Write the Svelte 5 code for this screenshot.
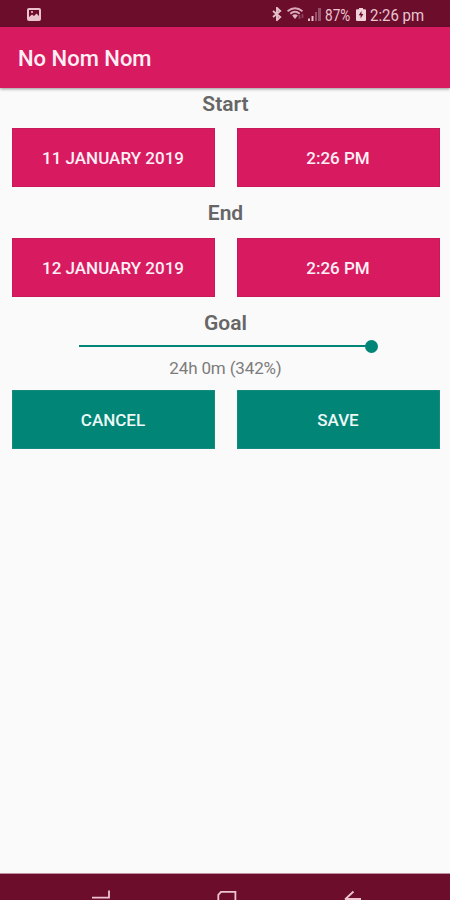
<script>
  const sections = [
    { title: 'Start', date: '11 January 2019', time: '2:26 PM' },
    { title: 'End', date: '12 January 2019', time: '2:26 PM' }
  ];
  const progress = 100;
</script>

<div class="screen">
  <div class="status">
    <svg class="photo" width="14" height="13" viewBox="0 0 14 13">
      <rect x="0" y="0" width="14" height="13" rx="2" fill="#e9c3d0" />
      <path d="M2 2h10v6L9.5 5.5 7 8 5 6.5 2 9z" fill="#6c0d2c" />
      <circle cx="5" cy="4" r="1.1" fill="#e9c3d0" />
    </svg>
    <svg class="bt" width="10" height="14" viewBox="0 0 10 14" fill="none" stroke="#e6bfcc" stroke-width="1.9">
      <path d="M1 4l7.2 6L5 13V1l3.2 3L1 10" />
    </svg>
    <svg class="wifi" width="18" height="14" viewBox="0 0 18 14" fill="none" stroke="#d9a9ba">
      <path d="M.5 4.200Q8 -1.800 15.500 4.200M3.300 6.700Q8 2.700 12.700 6.700" stroke-width="1.8" />
      <path d="M5.200 8.400Q8 6 10.800 8.400L8 12z" fill="#e0b2c1" stroke="none" />
      <path d="M12.500 8v4M15.500 7v4" stroke="#8e4560" stroke-width="1.7" />
    </svg>
    <svg class="signal" width="13" height="13" viewBox="0 0 13 13">
      <path d="M0 10.500h2V13H0zM3.500 8h2v5h-2z" fill="#e6bfcc" />
      <path d="M7 4h2v9H7zM10 0h3v13h-3z" fill="#95506a" />
    </svg>
    <span class="pct">87%</span>
    <svg class="battery" width="10" height="13" viewBox="0 0 10 13">
      <path d="M3 0h4v1.200h2q1 0 1 1V12q0 1-1 1H1q-1 0-1-1V2.200q0-1 1-1h2z" fill="#f0d2dc" />
      <path d="M5.500 3L2.700 7.200h1.900v3.200L7.400 6H5.500z" fill="#6c0d2c" />
    </svg>
    <span class="clock">2:26 pm</span>
  </div>

  <header><h1>No Nom Nom</h1></header>

  <main>
    {#each sections as s}
      <h2>{s.title}</h2>
      <div class="row">
        <button>{s.date}</button>
        <button>{s.time}</button>
      </div>
    {/each}
    <h2 class="goal">Goal</h2>
    <div class="slider">
      <div class="track" style="width: {progress}%"></div>
      <div class="thumb" style="left: {progress}%"></div>
    </div>
    <p>24h 0m (342%)</p>
    <div class="row actions">
      <button>Cancel</button>
      <button>Save</button>
    </div>
  </main>

  <nav>
    <svg width="450" height="26" viewBox="0 1 450 26" fill="none" stroke="#eec4d2" stroke-width="1.8">
      <path d="M92 24.600h17V17.500" />
      <path d="M218.300 28v-6.200l2.700-2.900h14.400V28" />
      <path d="M353.500 18.500l-8.500 8M345 26h16" />
    </svg>
  </nav>
</div>

<style>
  :global(body) { margin: 0; overflow: hidden; }
  .screen {
    width: 450px;
    height: 900px;
    display: flex;
    flex-direction: column;
    overflow: hidden;
    background: #fafafa;
    font-family: Roboto, sans-serif;
  }
  .status {
    flex: none;
    height: 27px;
    box-sizing: border-box;
    padding: 1px 0 0 27px;
    display: flex;
    align-items: center;
    background: #6c0d2c;
    color: #e9c6d1;
    white-space: nowrap;
  }
  .status svg { flex: none; }
  .bt { margin-left: 231px; }
  .wifi { margin-left: 5px; }
  .signal { margin-left: 3px; }
  .status span {
    flex: none;
    padding-top: 2px;
    font-size: 17px;
    line-height: 20px;
    transform-origin: left center;
  }
  .pct { margin-left: 4px; width: 31px; transform: scaleX(0.8); }
  .clock { margin-left: 4px; transform: scaleX(0.88); }
  header {
    flex: none;
    height: 61px;
    padding: 2px 0 0 18px;
    box-sizing: border-box;
    display: flex;
    align-items: center;
    background: #d81b60;
    box-shadow: 0 1px 3px rgba(0, 0, 0, 0.42);
    z-index: 1;
  }
  h1 {
    margin: 0;
    font-size: 22px;
    font-weight: 500;
    line-height: 30px;
    color: #fff0f6;
  }
  main {
    flex: 1;
    margin-top: -1px;
    padding: 0 10.500px 0 11.500px;
    text-align: center;
  }
  h2 {
    margin: 0;
    height: 40.500px;
    padding-top: 4px;
    box-sizing: border-box;
    font-size: 21px;
    line-height: 26px;
    font-weight: 600;
    color: #666;
  }
  .row { display: flex; gap: 22px; margin-bottom: 10.500px; }
  .row + h2 { padding-top: 3px; }
  button {
    flex: 1 1 0;
    height: 59px;
    padding: 1px 0 0;
    border: 1px solid #c81a58;
    border-radius: 0;
    background: #d81b60;
    color: #fff0f6;
    font: 500 17px/20px Roboto, sans-serif;
    text-transform: uppercase;
  }
  .goal { height: 33px; }
  .slider {
    position: relative;
    width: 293px;
    height: 12px;
    margin: 0 auto;
    display: flex;
    align-items: center;
  }
  .track { height: 2px; background: #008577; }
  .thumb {
    position: absolute;
    top: 0;
    width: 13px;
    height: 13px;
    margin-left: -7px;
    border-radius: 50%;
    background: #008577;
  }
  p {
    margin: 6px 0 12px;
    font-size: 17px;
    line-height: 20px;
    letter-spacing: -0.150px;
    color: #7c7c7c;
  }
  .actions button { background: #008577; border-color: #138b7e; color: #edf9f7; }
  nav {
    flex: none;
    height: 26px;
    background: #6c0d2c;
    box-shadow: 0 -1px 0 #bb91a0;
  }
  nav svg { display: block; }
</style>
